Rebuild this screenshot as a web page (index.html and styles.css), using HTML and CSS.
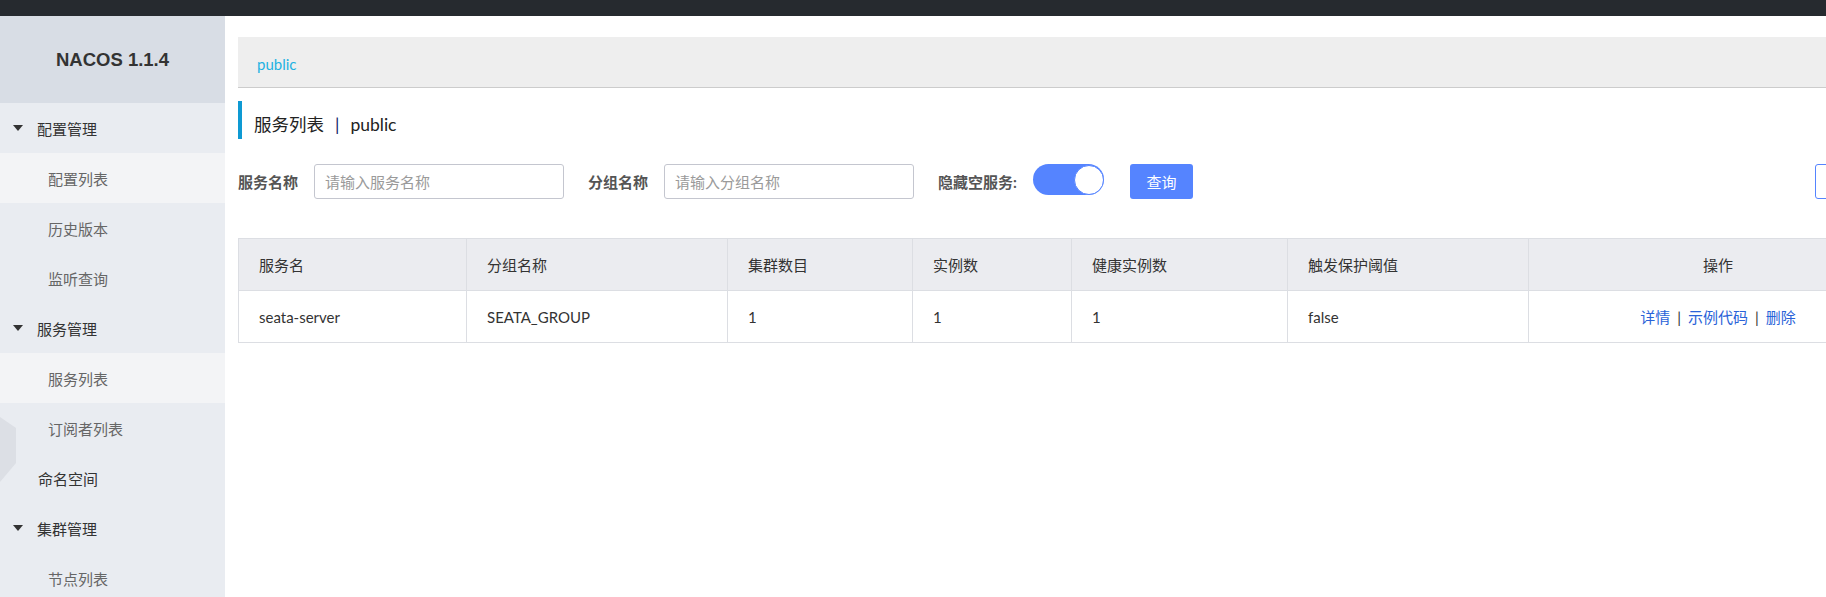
FILE: index.html
```html
<!DOCTYPE html>
<html lang="zh-CN">
<head>
<meta charset="utf-8">
<title>Nacos</title>
<link rel="stylesheet" href="styles.css">
</head>
<body>
<div class="page">
  <div class="topbar"></div>
  <div class="layout">
    <aside class="sidebar">
      <div class="brand">NACOS 1.1.4</div>
      <ul class="menu">
        <li class="group"><span class="caret"></span>配置管理</li>
        <li class="item active">配置列表</li>
        <li class="item">历史版本</li>
        <li class="item">监听查询</li>
        <li class="group"><span class="caret"></span>服务管理</li>
        <li class="item active">服务列表</li>
        <li class="item">订阅者列表</li>
        <li class="top">命名空间</li>
        <li class="group"><span class="caret"></span>集群管理</li>
        <li class="item">节点列表</li>
      </ul>
      <svg class="hex" width="16" height="65" viewBox="0 0 16 65"><polygon points="0,0 16,11 16,46 0,65" fill="#dcdfe5"/></svg>
    </aside>
    <main class="main">
      <div class="breadcrumb"><span class="crumb">public</span></div>
      <h1 class="title">服务列表<span class="sep">|</span>public</h1>
      <div class="filters">
        <span class="label">服务名称</span>
        <input class="field" type="text" placeholder="请输入服务名称">
        <span class="label">分组名称</span>
        <input class="field" type="text" placeholder="请输入分组名称">
        <span class="label">隐藏空服务:</span>
        <span class="switch"><span class="knob"></span></span>
        <button class="btn primary">查询</button>
        <span class="spacer"></span>
        <button class="btn outline">创建服务</button>
      </div>
      <table class="grid">
        <colgroup>
          <col class="c1"><col class="c2"><col class="c3"><col class="c4"><col class="c5"><col class="c6"><col class="c7">
        </colgroup>
        <thead>
          <tr>
            <th>服务名</th>
            <th>分组名称</th>
            <th>集群数目</th>
            <th>实例数</th>
            <th>健康实例数</th>
            <th>触发保护阈值</th>
            <th class="center">操作</th>
          </tr>
        </thead>
        <tbody>
          <tr>
            <td>seata-server</td>
            <td>SEATA_GROUP</td>
            <td>1</td>
            <td>1</td>
            <td>1</td>
            <td>false</td>
            <td class="center"><a class="link">详情</a><span class="bar">|</span><a class="link">示例代码</a><span class="bar">|</span><a class="link">删除</a></td>
          </tr>
        </tbody>
      </table>
    </main>
  </div>
</div>
</body>
</html>
```

FILE: styles.css
```css
html, body {
  margin: 0;
  padding: 0;
  overflow: hidden;
  background: #fff;
}

body {
  font-family: Lato, "Noto Sans CJK SC", sans-serif;
  font-size: 15px;
  color: #333;
}

.page {
  width: 1920px;
}

.topbar {
  height: 16px;
  background: #262a2f;
}

.layout {
  display: flex;
  height: 581px;
}

.sidebar {
  position: relative;
  flex: none;
  width: 225px;
  background: #e9ecf1;
}

.brand {
  height: 87px;
  display: flex;
  align-items: center;
  justify-content: center;
  background: #d8dde5;
  font-family: "Liberation Sans", Arial, sans-serif;
  font-weight: bold;
  font-size: 18.5px;
  color: #333;
}

.menu {
  list-style: none;
  margin: 0;
  padding: 0;
}

.menu li {
  height: 50px;
  display: flex;
  align-items: center;
  box-sizing: border-box;
}

.group {
  padding-left: 13px;
  color: #333;
}

.caret {
  width: 0;
  height: 0;
  border-left: 5.5px solid transparent;
  border-right: 5.5px solid transparent;
  border-top: 6px solid #333;
  margin-right: 14px;
}

.top {
  padding-left: 38px;
  color: #333;
}

.item {
  padding-left: 48px;
  color: #666;
}

.item.active {
  background: #f3f4f6;
}

.hex {
  position: absolute;
  left: 0;
  top: 401px;
  display: block;
}

.main {
  flex: none;
  width: 1669px;
  padding: 21px 13px 0;
}

.breadcrumb {
  height: 50px;
  background: #eeeeee;
  border-bottom: 1px solid #cccccc;
  display: flex;
  align-items: center;
  padding: 3px 0 0 19px;
  box-sizing: content-box;
  height: 47px;
}

.crumb {
  color: #1fb2e2;
}

.title {
  margin: 13px 0 0;
  height: 38px;
  box-sizing: border-box;
  border-left: 4px solid #0e9ad3;
  padding: 11px 0 0 12px;
  font-size: 17.5px;
  font-weight: normal;
  line-height: 26px;
  color: #222;
}

.sep {
  color: #0b1a66;
  margin: 0 11px;
}

.filters {
  margin-top: 25px;
  height: 35px;
  display: flex;
  align-items: center;
}

.label {
  font-weight: bold;
  color: #555;
  margin-right: 16px;
  white-space: nowrap;
}

.field {
  width: 250px;
  height: 35px;
  box-sizing: border-box;
  border: 1px solid #c4c6cf;
  border-radius: 3px;
  padding: 0 10px;
  margin: 0 24px 0 0;
  font-family: Lato, "Noto Sans CJK SC", sans-serif;
  font-size: 15px;
  color: #333;
  background: #fff;
  outline: none;
}

.field::placeholder {
  color: #9a9a9a;
}

.switch {
  align-self: flex-start;
  width: 71px;
  height: 31px;
  box-sizing: border-box;
  border-radius: 16px;
  background: #5584ff;
  display: flex;
  align-items: center;
  justify-content: flex-end;
  margin-right: 26px;
}

.knob {
  width: 30px;
  height: 30px;
  box-sizing: border-box;
  border-radius: 50%;
  background: #fff;
  border: 1px solid #5584ff;
}

.btn {
  height: 35px;
  box-sizing: border-box;
  border-radius: 3px;
  font-family: Lato, "Noto Sans CJK SC", sans-serif;
  font-size: 15px;
  padding: 0;
  cursor: pointer;
}

.btn.primary {
  width: 63px;
  border: none;
  background: #5584ff;
  color: #fff;
}

.btn.outline {
  width: 92px;
  border: 1px solid #5584ff;
  background: #fff;
  color: #5584ff;
}

.spacer {
  flex: 1;
}

.grid {
  margin-top: 39px;
  width: 1669px;
  table-layout: fixed;
  border-collapse: collapse;
}

.c1 { width: 228px; }
.c2 { width: 261px; }
.c3 { width: 185px; }
.c4 { width: 159px; }
.c5 { width: 216px; }
.c6 { width: 241px; }
.c7 { width: 379px; }

.grid th,
.grid td {
  height: 51px;
  padding: 0 20px;
  border: 1px solid #dcdee3;
  text-align: left;
  font-weight: normal;
  color: #333;
  white-space: nowrap;
}

.grid th {
  background: #ebecf0;
}

.grid .center {
  text-align: center;
}

.link {
  color: #2a63d8;
  cursor: pointer;
}

.bar {
  color: #333;
  margin: 0 7px;
}
```
